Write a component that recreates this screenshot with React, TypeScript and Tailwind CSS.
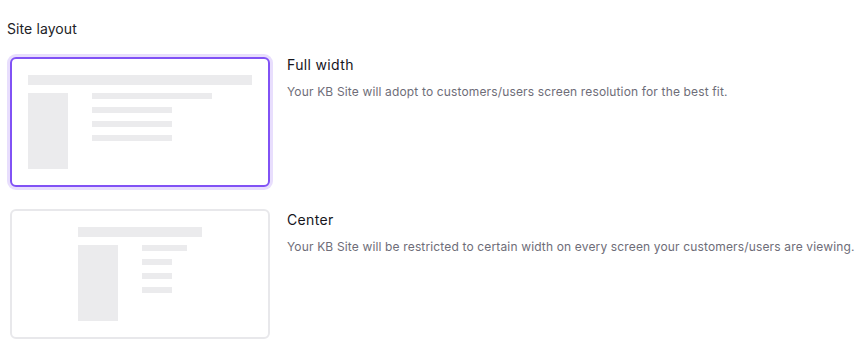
import React from "react";

export default function App() {
  return (
    <div
      className="w-[862px] h-[358px] bg-white pl-[7px] pt-[19px]"
      style={{ fontFamily: "Inter, 'Noto Sans', sans-serif" }}
    >
      <div className="text-[14px] leading-[20px] tracking-[0.1px] text-[#222226]">Site layout</div>

      <div className="mt-[15px] flex items-start">
        <div className="w-[266px] shrink-0 rounded-[9px] bg-[#e8defd] p-[3px]">
          <div className="h-[130px] w-[260px] rounded-[6px] border-2 border-[#8152f5] bg-white p-4">
            <div className="h-[10px] w-full bg-[#ebebed]" />
            <div className="mt-2 flex gap-6">
              <div className="h-[76px] w-10 bg-[#ebebed]" />
              <div className="flex flex-col gap-2">
                <div className="h-[6px] w-[120px] bg-[#ebebed]" />
                <div className="h-[6px] w-20 bg-[#ebebed]" />
                <div className="h-[6px] w-20 bg-[#ebebed]" />
                <div className="h-[6px] w-20 bg-[#ebebed]" />
              </div>
            </div>
          </div>
        </div>
        <div className="ml-[14px] mt-px">
          <div className="text-[14px] font-normal leading-[20px] tracking-[0.35px] text-[#16151c]">Full width</div>
          <div className="mt-[9px] text-[12px] leading-[16px] tracking-[0.15px] text-[#6e6d78]">
            Your KB Site will adopt to customers/users screen resolution for the best fit.
          </div>
        </div>
      </div>

      <div className="mt-[19px] flex items-start">
        <div className="w-[266px] shrink-0 px-[3px]">
          <div className="h-[130px] w-[260px] rounded-[6px] border-2 border-[#e8e8eb] bg-white py-4">
            <div className="mx-auto w-[124px]">
              <div className="h-[10px] w-full bg-[#ebebed]" />
              <div className="mt-2 flex gap-6">
                <div className="h-[76px] w-10 bg-[#ebebed]" />
                <div className="flex flex-col gap-2">
                  <div className="h-[6px] w-[45px] bg-[#ebebed]" />
                  <div className="h-[6px] w-[30px] bg-[#ebebed]" />
                  <div className="h-[6px] w-[30px] bg-[#ebebed]" />
                  <div className="h-[6px] w-[30px] bg-[#ebebed]" />
                </div>
              </div>
            </div>
          </div>
        </div>
        <div className="ml-[14px] mt-px">
          <div className="text-[14px] font-normal leading-[20px] tracking-[0.35px] text-[#16151c]">Center</div>
          <div className="mt-[9px] text-[12px] leading-[16px] tracking-[0.15px] text-[#6e6d78]">
            Your KB Site will be restricted to certain width on every screen your customers/users are viewing.
          </div>
        </div>
      </div>
    </div>
  );
}
